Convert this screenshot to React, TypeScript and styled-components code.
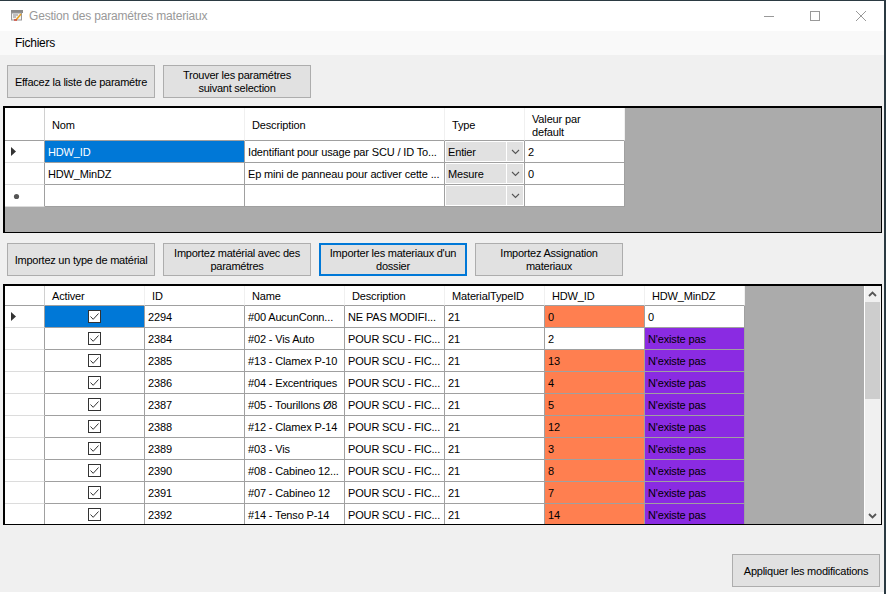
import React from "react";
import styled, { createGlobalStyle } from "styled-components";

const Global = createGlobalStyle`
  html, body { margin: 0; padding: 0; background: #fff; width: 886px; height: 594px; overflow: hidden; }
  * { box-sizing: border-box; }
`;

const Window = styled.div`
  width: 886px;
  height: 594px;
  border-top: 1px solid #2b3a42;
  border-right: 2px solid #2b3a42;
  display: flex;
  flex-direction: column;
  font-family: "Liberation Sans", Arial, sans-serif;
  font-size: 11px;
  color: #000;
  background: #fff;
`;

const TitleBar = styled.div`
  height: 30px;
  display: flex;
  align-items: center;
  background: #fff;
  flex: none;
`;

const AppIcon = styled.svg`
  width: 16px;
  height: 16px;
  margin: 0 4px 0 9px;
  flex: none;
`;

const TitleText = styled.span`
  font-size: 12px;
  color: #999;
  flex: 1;
  letter-spacing: -0.18px;
`;

const WinButton = styled.div`
  width: 46px;
  height: 30px;
  display: flex;
  align-items: center;
  justify-content: center;
`;

const MenuBar = styled.div`
  height: 24px;
  background: #f9f9f9;
  display: flex;
  align-items: center;
  padding-left: 15px;
  font-size: 12px;
  letter-spacing: -0.25px;
  flex: none;
`;

const Body = styled.div`
  height: 537px;
  background: #f0f0f0;
  padding: 10px 2px 0 3px;
  display: flex;
  flex-direction: column;
`;

const ButtonRow = styled.div<{ $mt?: number }>`
  display: flex;
  gap: 8px;
  padding-left: 4px;
  margin-top: ${(p) => p.$mt ?? 0}px;
  flex: none;
`;

const Button = styled.div<{ $focused?: boolean; $single?: boolean }>`
  width: 148px;
  height: 33px;
  background: #e1e1e1;
  border: ${(p) => (p.$focused ? "2px solid #0078d7" : "1px solid #adadad")};
  display: flex;
  align-items: center;
  justify-content: center;
  text-align: center;
  line-height: 13px;
  padding: ${(p) => (p.$single ? "2px 2px 0" : "0 2px")};
  letter-spacing: -0.24px;
`;

const Grid = styled.div<{ $height: number; $mt: number }>`
  height: ${(p) => p.$height}px;
  margin-top: ${(p) => p.$mt}px;
  border: 1px solid #000;
  border-top-width: 2px;
  border-left-width: 2px;
  background: #ababab;
  display: flex;
  flex: none;
  overflow: hidden;
`;

const GridRows = styled.div`
  flex: 1;
  min-width: 0;
`;

const Row = styled.div<{ $height: number }>`
  display: flex;
  height: ${(p) => p.$height}px;
`;

const Cell = styled.div<{ $w: number; $bg?: string; $color?: string }>`
  width: ${(p) => p.$w}px;
  flex: none;
  background: ${(p) => p.$bg ?? "#fff"};
  color: ${(p) => p.$color ?? "#000"};
  border-right: 1px solid #a0a0a0;
  border-bottom: 1px solid #a0a0a0;
  display: flex;
  align-items: center;
  padding-left: 3px;
  white-space: nowrap;
  overflow: hidden;
  letter-spacing: -0.15px;
`;

const CheckCell = styled(Cell)`
  justify-content: center;
  padding-left: 0;
`;

const HeaderCell = styled.div<{ $w: number; $pt?: number }>`
  width: ${(p) => p.$w}px;
  flex: none;
  background: #fff;
  border-right: 1px solid #f0f0f0;
  border-bottom: 1px solid #a0a0a0;
  display: flex;
  align-items: center;
  padding: ${(p) => p.$pt ?? 1}px 0 0 7px;
  line-height: 13px;
  letter-spacing: -0.15px;
`;

const RowHead = styled.div`
  width: 40px;
  flex: none;
  background: #fff;
  border-right: 1px solid #a0a0a0;
  border-bottom: 1px solid #dcdcdc;
  display: flex;
  align-items: center;
  padding-left: 6px;
`;

const CornerHead = styled(RowHead)`
  border-right-color: #d0d0d0;
  border-bottom-color: #a0a0a0;
`;

const ComboCell = styled.div<{ $w: number }>`
  width: ${(p) => p.$w}px;
  flex: none;
  display: flex;
  background: #fff;
  border-right: 1px solid #a0a0a0;
  border-bottom: 1px solid #a0a0a0;
  padding: 1px;
  letter-spacing: -0.15px;
`;

const ComboText = styled.div`
  flex: 1;
  background: #e1e1e1;
  display: flex;
  align-items: center;
  padding-left: 2px;
`;

const ComboArrow = styled.div`
  width: 17px;
  background: #e1e1e1;
  border-left: 1px solid #fff;
  display: flex;
  align-items: center;
  justify-content: center;
`;

const Scrollbar = styled.div`
  width: 17px;
  flex: none;
  background: #f0f0f0;
  border-left: 1px solid #fff;
  display: flex;
  flex-direction: column;
`;

const ScrollEnd = styled.div`
  height: 16px;
  padding-right: 1px;
  display: flex;
  align-items: center;
  justify-content: center;
  flex: none;
`;

const ScrollTrack = styled.div`
  flex: 1;
`;

const ScrollThumb = styled.div`
  height: 97px;
  margin-right: 1px;
  background: #cdcdcd;
`;

const Footer = styled.div`
  display: flex;
  justify-content: flex-end;
  padding-right: 2px;
  margin-top: 29px;
`;

const StarMark = styled.svg`
  margin: 1px 0 0 2px;
`;

const Marker = () => (
  <svg width="5" height="9" viewBox="0 0 5 9">
    <path d="M0 0 L5 4.5 L0 9 Z" fill="#333" />
  </svg>
);

const Star = () => (
  <StarMark width="7" height="7" viewBox="0 0 7 7">
    <circle cx="3.5" cy="3.5" r="2.6" fill="#555" />
  </StarMark>
);

const Chevron = ({ up, bold }: { up?: boolean; bold?: boolean }) => (
  <svg width="9" height="6" viewBox="0 0 9 6">
    <path d={up ? "M1 5 L4.5 1.5 L8 5" : "M1 1 L4.5 4.5 L8 1"} fill="none" stroke="#555" strokeWidth={bold ? 1.8 : 1.1} />
  </svg>
);

const Check = () => (
  <svg width="13" height="13" viewBox="0 0 13 13">
    <rect x="0.5" y="0.5" width="12" height="12" fill="#fff" stroke="#333" />
    <path d="M2.5 6.5 L5.2 9.3 L10.5 3.5" fill="none" stroke="#333" strokeWidth="1" />
  </svg>
);

const topCols = [200, 200, 80, 100];
const paramRows = [
  { name: "HDW_ID", desc: "Identifiant pour usage par SCU / ID To...", type: "Entier", val: "2", selected: true, marker: "arrow" },
  { name: "HDW_MinDZ", desc: "Ep mini de panneau pour activer cette ...", type: "Mesure", val: "0" },
  { name: "", desc: "", type: "", val: "", marker: "star" },
];

const matCols = [100, 100, 100, 100, 100, 100, 100];
const ORANGE = "#ff7f50";
const PURPLE = "#8a2be2";
const BLUE = "#0078d7";
const materials = [
  ["2294", "#00 AucunConn...", "NE PAS MODIFI...", "0", "0"],
  ["2384", "#02 - Vis Auto", "POUR SCU - FIC...", "2", ""],
  ["2385", "#13 - Clamex P-10", "POUR SCU - FIC...", "13", ""],
  ["2386", "#04 - Excentriques", "POUR SCU - FIC...", "4", ""],
  ["2387", "#05 - Tourillons Ø8", "POUR SCU - FIC...", "5", ""],
  ["2388", "#12 - Clamex P-14", "POUR SCU - FIC...", "12", ""],
  ["2389", "#03 - Vis", "POUR SCU - FIC...", "3", ""],
  ["2390", "#08 - Cabineo 12...", "POUR SCU - FIC...", "8", ""],
  ["2391", "#07 - Cabineo 12", "POUR SCU - FIC...", "7", ""],
  ["2392", "#14 - Tenso P-14", "POUR SCU - FIC...", "14", ""],
];

export default function App() {
  return (
    <Window>
      <Global />
      <TitleBar>
        <AppIcon viewBox="0 0 16 16">
          <rect x="2" y="2" width="12" height="3" fill="#8a8a8a" />
          <rect x="2.5" y="5" width="10" height="7" fill="#f4f4f4" stroke="#999" />
          <path d="M4 7h5M4 9h3" stroke="#888" />
          <path d="M7 12 L12 6" stroke="#e8a020" strokeWidth="1.6" />
          <path d="M5 12h3" stroke="#d04030" strokeWidth="1.4" />
        </AppIcon>
        <TitleText>Gestion des paramétres materiaux</TitleText>
        <WinButton>
          <svg width="10" height="10" viewBox="0 0 10 10"><path d="M0 5.5H10" stroke="#999" /></svg>
        </WinButton>
        <WinButton>
          <svg width="10" height="10" viewBox="0 0 10 10"><rect x="0.5" y="0.5" width="9" height="9" fill="none" stroke="#999" /></svg>
        </WinButton>
        <WinButton>
          <svg width="10" height="10" viewBox="0 0 10 10"><path d="M0 0L10 10M10 0L0 10" stroke="#999" /></svg>
        </WinButton>
      </TitleBar>
      <MenuBar>Fichiers</MenuBar>
      <Body>
        <ButtonRow>
          <Button $single>Effacez la liste de paramétre</Button>
          <Button>Trouver les paramétres<br />suivant selection</Button>
        </ButtonRow>
        <Grid $height={127} $mt={8}>
          <GridRows>
            <Row $height={33}>
              <CornerHead />
              <HeaderCell $w={topCols[0]} $pt={3}>Nom</HeaderCell>
              <HeaderCell $w={topCols[1]} $pt={3}>Description</HeaderCell>
              <HeaderCell $w={topCols[2]} $pt={3}>Type</HeaderCell>
              <HeaderCell $w={topCols[3]} $pt={3}>Valeur par<br />default</HeaderCell>
            </Row>
            {paramRows.map((r) => (
              <Row $height={22} key={r.marker + r.name}>
                <RowHead>
                  {r.marker === "arrow" && <Marker />}
                  {r.marker === "star" && <Star />}
                </RowHead>
                <Cell $w={topCols[0]} $bg={r.selected ? BLUE : "#fff"} $color={r.selected ? "#fff" : "#000"}>{r.name}</Cell>
                <Cell $w={topCols[1]}>{r.desc}</Cell>
                <ComboCell $w={topCols[2]}>
                  <ComboText>{r.type}</ComboText>
                  <ComboArrow><Chevron /></ComboArrow>
                </ComboCell>
                <Cell $w={topCols[3]}>{r.val}</Cell>
              </Row>
            ))}
          </GridRows>
        </Grid>
        <ButtonRow $mt={10}>
          <Button $single>Importez un type de matérial</Button>
          <Button>Importez matérial avec des<br />paramétres</Button>
          <Button $focused>Importer les materiaux d'un<br />dossier</Button>
          <Button>Importez Assignation<br />materiaux</Button>
        </ButtonRow>
        <Grid $height={241} $mt={8}>
          <GridRows>
            <Row $height={20}>
              <CornerHead />
              <HeaderCell $w={matCols[0]}>Activer</HeaderCell>
              <HeaderCell $w={matCols[1]}>ID</HeaderCell>
              <HeaderCell $w={matCols[2]}>Name</HeaderCell>
              <HeaderCell $w={matCols[3]}>Description</HeaderCell>
              <HeaderCell $w={matCols[4]}>MaterialTypeID</HeaderCell>
              <HeaderCell $w={matCols[5]}>HDW_ID</HeaderCell>
              <HeaderCell $w={matCols[6]}>HDW_MinDZ</HeaderCell>
            </Row>
            {materials.map((m, i) => (
              <Row $height={22} key={m[0]}>
                <RowHead>{i === 0 && <Marker />}</RowHead>
                <CheckCell $w={matCols[0]} $bg={i === 0 ? BLUE : "#fff"}><Check /></CheckCell>
                <Cell $w={matCols[1]}>{m[0]}</Cell>
                <Cell $w={matCols[2]}>{m[1]}</Cell>
                <Cell $w={matCols[3]}>{m[2]}</Cell>
                <Cell $w={matCols[4]}>21</Cell>
                <Cell $w={matCols[5]} $bg={i === 1 ? "#fff" : ORANGE}>{m[3]}</Cell>
                <Cell $w={matCols[6]} $bg={i === 0 ? "#fff" : PURPLE}>{i === 0 ? m[4] : "N'existe pas"}</Cell>
              </Row>
            ))}
          </GridRows>
          <Scrollbar>
            <ScrollEnd><Chevron up bold /></ScrollEnd>
            <ScrollTrack><ScrollThumb /></ScrollTrack>
            <ScrollEnd><Chevron bold /></ScrollEnd>
          </Scrollbar>
        </Grid>
        <Footer>
          <Button $single>Appliquer les modifications</Button>
        </Footer>
      </Body>
    </Window>
  );
}
